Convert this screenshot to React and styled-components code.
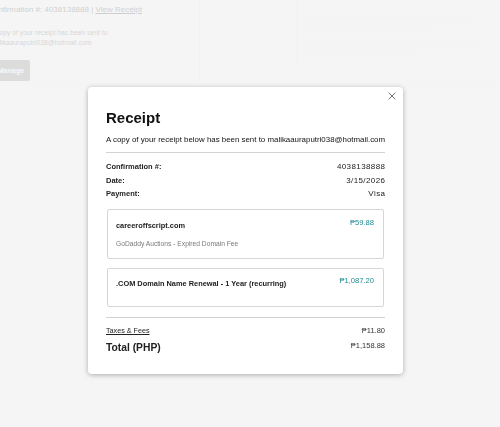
import React from "react";
import styled, { createGlobalStyle } from "styled-components";
import { X } from "lucide-react";

const GlobalStyle = createGlobalStyle`
  html, body {
    margin: 0;
    padding: 0;
    background: #f2f2f2;
    font-family: "Liberation Sans", Arial, "DejaVu Sans", sans-serif;
    color: #111;
  }
  * { box-sizing: border-box; }
`;

const items = [
  {
    name: "careeroffscript.com",
    note: "GoDaddy Auctions - Expired Domain Fee",
    price: "₱59.88",
  },
  {
    name: ".COM Domain Name Renewal - 1 Year (recurring)",
    price: "₱1,087.20",
  },
];

const App = () => {
  return (
    <>
      <GlobalStyle />
      <Page>
        <Header>
          <LeftCol>
            <ConfirmLine>
              Confirmation #: 4038138888 | <u>View Receipt</u>
            </ConfirmLine>
            <SentNote>
              A copy of your receipt has been sent to
              <br />
              malikaauraputri038@hotmail.com
            </SentNote>
            <ManageButton>Manage</ManageButton>
          </LeftCol>
          <MidCol />
          <RightCol>
            <FaintLine width="90%" />
            <FaintLine width="70%" />
            <FaintLine width="95%" />
            <FaintLine width="60%" />
          </RightCol>
        </Header>
      </Page>

      <Overlay>
        <Modal>
          <CloseButton aria-label="Close">
            <X size={12} strokeWidth={1.5} />
          </CloseButton>
          <Title>Receipt</Title>
          <Subtitle>
            A copy of your receipt below has been sent to
            malikaauraputri038@hotmail.com
          </Subtitle>
          <Divider />
          <Details>
            <Row>
              <Label>Confirmation #:</Label>
              <DetailValue>4038138888</DetailValue>
            </Row>
            <Row>
              <Label>Date:</Label>
              <DetailValue>3/15/2026</DetailValue>
            </Row>
            <Row>
              <Label>Payment:</Label>
              <DetailValue>Visa</DetailValue>
            </Row>
          </Details>

          <Items>
            {items.map((item) => (
              <ItemCard key={item.name} $hasNote={!!item.note}>
                <ItemText>
                  <ItemName>{item.name}</ItemName>
                  {item.note && <ItemNote>{item.note}</ItemNote>}
                </ItemText>
                <ItemPrice>{item.price}</ItemPrice>
              </ItemCard>
            ))}
          </Items>

          <Divider $spaced />
          <Summary>
            <Row>
              <TaxLink href="#">Taxes &amp; Fees</TaxLink>
              <Value>₱11.80</Value>
            </Row>
            <TotalRow>
              <TotalLabel>Total (PHP)</TotalLabel>
              <Value>₱1,158.88</Value>
            </TotalRow>
          </Summary>
        </Modal>
      </Overlay>
    </>
  );
};

export default App;

/* background page */

const Page = styled.div`
  width: 500px;
  height: 427px;
  background: #f2f2f2;
  overflow: hidden;
`;

const Header = styled.div`
  display: flex;
  height: 84px;
  border-bottom: 1px solid #e8e8e8;
`;

const LeftCol = styled.div`
  width: 212px;
  margin-left: -12px;
  padding-top: 5px;
  border-right: 1px solid #e4e4e4;
`;

const ConfirmLine = styled.div`
  font-size: 8px;
  line-height: 10px;
  color: #333;
  white-space: nowrap;

  & > u {
    color: #333;
  }
`;

const SentNote = styled.div`
  margin-top: 13px;
  margin-left: 2px;
  font-size: 6.8px;
  line-height: 10px;
  color: #555;
  white-space: nowrap;
`;

const ManageButton = styled.div`
  display: inline-flex;
  align-items: center;
  margin-top: 12px;
  height: 21px;
  padding: 0 6px 0 10px;
  background: #777;
  color: #fff;
  font-size: 7px;
  font-weight: bold;
  border-radius: 2px;
`;

const MidCol = styled.div`
  width: 97px;
  border-right: 1px solid #eaeaea;
  margin-bottom: 18px;
`;

const RightCol = styled.div`
  flex: 1;
  display: flex;
  flex-direction: column;
  gap: 10px;
  padding: 20px 10px 0 8px;
`;

const FaintLine = styled.div`
  width: ${({ width }) => width};
  height: 1px;
  background: #ebebeb;
`;

/* modal */

const Overlay = styled.div`
  position: fixed;
  inset: 0;
  background: rgba(245, 245, 245, 0.8);
  display: flex;
  align-items: flex-start;
  padding: 87px 0 0 88px;
`;

const Modal = styled.div`
  position: relative;
  width: 315px;
  height: 287px;
  padding: 21px 18px 20px 18px;
  background: #fff;
  border-radius: 4px;
  box-shadow: 0 1px 5px rgba(0, 0, 0, 0.3);
`;

const CloseButton = styled.button`
  position: absolute;
  top: 1px;
  right: 3px;
  width: 16px;
  height: 16px;
  display: flex;
  align-items: center;
  justify-content: center;
  padding: 0;
  border: none;
  background: none;
  color: #444;
  cursor: pointer;
`;

const Title = styled.h2`
  margin: 0;
  font-size: 15px;
  line-height: 20px;
  font-weight: bold;
  color: #111;
`;

const Subtitle = styled.p`
  margin: 7px 0 0;
  font-size: 7.9px;
  line-height: 10px;
  color: #111;
  white-space: nowrap;
`;

const Divider = styled.hr`
  margin: ${({ $spaced }) => ($spaced ? "10px 0 0" : "7px 0 0")};
  border: none;
  border-top: 1px solid #d2d2d2;
`;

const Details = styled.div`
  margin-top: 7px;
`;

const Row = styled.div`
  display: flex;
  justify-content: space-between;
  align-items: center;
  height: 13.5px;
`;

const Label = styled.span`
  font-size: 7.5px;
  font-weight: bold;
  color: #222;
`;

const Value = styled.span`
  font-size: 7.5px;
  color: #333;
`;

const DetailValue = styled(Value)`
  font-size: 8px;
  letter-spacing: 0.4px;
  margin-right: -0.4px;
  color: #222;
`;

const Items = styled.div`
  display: flex;
  flex-direction: column;
  gap: 9px;
  margin-top: 8px;
  padding: 0 1px;
`;

const ItemCard = styled.div`
  display: flex;
  justify-content: space-between;
  align-items: flex-start;
  padding: ${({ $hasNote }) => ($hasNote ? "11px 9px 9px 8px" : "10px 9px 17px 8px")};
  border: 1px solid #d6d6d6;
  border-radius: 2px;
`;

const ItemText = styled.div`
  display: flex;
  flex-direction: column;
  gap: 8px;
`;

const ItemName = styled.div`
  font-size: 7.4px;
  line-height: 10px;
  font-weight: bold;
  color: #222;
`;

const ItemNote = styled.div`
  font-size: 6.7px;
  line-height: 10px;
  color: #7a7a7a;
`;

const ItemPrice = styled.div`
  margin-top: -3px;
  font-size: 7.6px;
  line-height: 10px;
  color: #1f8a91;
`;

const Summary = styled.div`
  margin-top: 6px;
`;

const TaxLink = styled.a`
  font-size: 7.2px;
  color: #222;
  text-decoration: underline;
`;

const TotalRow = styled.div`
  display: flex;
  justify-content: space-between;
  align-items: flex-start;
  margin-top: 4px;
`;

const TotalLabel = styled.span`
  font-size: 10.3px;
  line-height: 14px;
  font-weight: bold;
  color: #222;
`;
